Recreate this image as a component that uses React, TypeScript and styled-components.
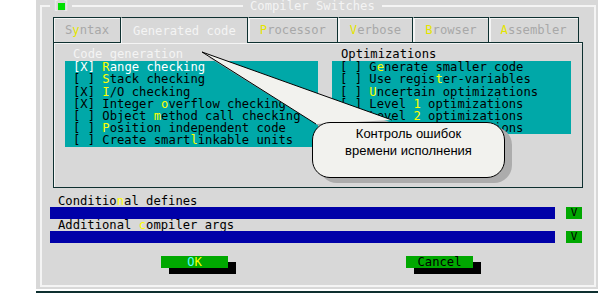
import React from 'react';
import styled, { createGlobalStyle } from 'styled-components';

const GlobalStyle = createGlobalStyle`
  html, body {
    margin: 0;
    padding: 0;
    background: #ffffff;
  }
  body {
    font-family: "DejaVu Sans Mono", "Liberation Mono", monospace;
    font-size: 12.2px;
  }
`;

const DARK = '#0e3030';
const LIGHT = '#f4f4f4';
const GRAY = '#d8d8d8';
const TEAL = '#00a8a8';

const Screen = styled.div`
  position: relative;
  width: 613px;
  height: 300px;
  overflow: hidden;
  padding-left: 36px;
  box-sizing: border-box;
`;

const Dialog = styled.div`
  width: 562px;
  height: 289px;
  background: ${GRAY};
  padding: 5px 2px 2px 4px;
  box-sizing: border-box;
  display: flex;
`;

const StatusLine = styled.div`
  width: 562px;
  height: 2px;
  margin-top: 2px;
  background: ${DARK};
`;

const Frame = styled.div`
  flex: 1;
  border: 2px solid ${LIGHT};
  display: flex;
  flex-direction: column;
`;

const TitleBar = styled.div`
  display: flex;
  align-items: center;
  height: 12px;
  margin-top: -7px;
  line-height: 12px;
`;

const CloseBox = styled.div`
  display: flex;
  align-items: center;
  width: 22px;
  margin-left: 8px;
  justify-content: center;
  background: ${GRAY};
  color: #ececec;
`;

const Bracket = styled.span<{ $side: 'l' | 'r' }>`
  margin: ${p => (p.$side === 'l' ? '0 -2px 0 0' : '0 0 0 -2px')};
`;

const GreenSquare = styled.span`
  width: 7px;
  height: 7px;
  background: #00e000;
`;

const Title = styled.div`
  margin-left: 171px;
  padding: 0 7px;
  background: ${GRAY};
  color: ${LIGHT};
`;

const Tabs = styled.div`
  display: flex;
  margin: 5px 0 0 11px;
  height: 25px;
  position: relative;
  z-index: 1;
`;

const Tab = styled.div<{ $active?: boolean }>`
  padding: 0 11px;
  display: flex;
  align-items: center;
  box-sizing: border-box;
  height: ${p => (p.$active ? '26px' : '25px')};
  border-top: 1px solid ${DARK};
  border-left: 1px solid ${p => (p.$active ? LIGHT : DARK)};
  border-right: 1px solid ${DARK};
  background: ${GRAY};
  color: ${p => (p.$active ? LIGHT : '#a8a8a8')};
  box-shadow: ${p => (p.$active ? 'none' : `inset 1px 1px 0 ${LIGHT}`)};
  & + & {
    border-left: ${p => (p.$active ? `1px solid ${LIGHT}` : 'none')};
  }
`;

const Hot = styled.span<{ $dim?: boolean }>`
  color: ${p => (p.$dim ? '#e4e400' : '#ffff00')};
`;

const Panel = styled.div`
  margin-left: 11px;
  width: 530px;
  height: 146px;
  box-sizing: border-box;
  border: 1px solid ${DARK};
  box-shadow: inset 1px 1px 0 ${LIGHT};
  padding: 5px 10px 0 11px;
  display: grid;
  grid-template-columns: 253px 239px;
  column-gap: 14px;
  align-items: start;
`;

const Group = styled.div``;

const GroupLabel = styled.div<{ $focused?: boolean }>`
  line-height: 12.2px;
  height: 12.2px;
  margin-bottom: 1px;
  padding-left: ${p => (p.$focused ? '8px' : '9px')};
  color: ${p => (p.$focused ? LIGHT : '#000')};
  white-space: pre;
`;

const CheckList = styled.div`
  background: ${TEAL};
  padding-left: 8px;
`;

const CheckItem = styled.div<{ $selected?: boolean }>`
  line-height: 12.2px;
  height: 12.2px;
  white-space: pre;
  color: ${p => (p.$selected ? '#ffffff' : '#000000')};
`;

const Fields = styled.div`
  margin: 7px 0 0 8px;
`;

const FieldLabel = styled.div`
  line-height: 12.2px;
  height: 12.2px;
  padding-left: 8px;
  white-space: pre;
  color: #000;
`;

const FieldRow = styled.div`
  display: grid;
  grid-template-columns: 505px 16px;
  column-gap: 11px;
  height: 12px;
`;

const InputBar = styled.div`
  background: #0000a8;
`;

const DropButton = styled.div`
  background: #00a800;
  color: #000;
  font-size: 11px;
  line-height: 12px;
  text-align: center;
`;

const Buttons = styled.div`
  display: flex;
  margin: 12.5px 0 0 111px;
  gap: 178px;
`;

const Button = styled.div<{ $default?: boolean }>`
  width: 67px;
  height: 12px;
  line-height: 12px;
  background: #00a800;
  box-shadow: 8px 6px 0 #000;
  text-align: center;
  color: ${p => (p.$default ? '#ffff00' : '#000')};
`;

const Cyan = styled.span`
  color: #55ffff;
`;

const Bubble = styled.div`
  position: absolute;
  left: 312px;
  top: 122px;
  width: 193px;
  height: 56px;
  box-sizing: border-box;
  border: 1px solid #000;
  border-radius: 18px;
  background: #f2f2ee;
  box-shadow: 7px 5px 0 #acacac;
  padding-top: 3px;
  text-align: center;
  font-family: "Liberation Sans", Arial, sans-serif;
  font-size: 13px;
  line-height: 16.7px;
  color: #000;
`;

const Tail = styled.svg`
  position: absolute;
  left: 0;
  top: 0;
  overflow: visible;
  pointer-events: none;
`;

const codeGen: [boolean, string, string, string][] = [
  [true, '', 'R', 'ange checking'],
  [false, '', 'S', 'tack checking'],
  [true, '', 'I', '/O checking'],
  [true, 'Integer ', 'o', 'verflow checking'],
  [false, 'Object ', 'm', 'ethod call checking'],
  [false, '', 'P', 'osition independent code'],
  [false, 'Create smart', 'l', 'inkable units'],
];

const optim: [string, string, string][] = [
  ['G', 'e', 'nerate smaller code'],
  ['Use regis', 't', 'er-variables'],
  ['', 'U', 'ncertain optimizations'],
  ['Level ', '1', ' optimizations'],
  ['Level ', '2', ' optimizations'],
  ['Level ', '3', ' optimizations'],
];

const tabs: [string, string, string][] = [
  ['S', 'y', 'ntax'],
  ['Generated code', '', ''],
  ['', 'P', 'rocessor'],
  ['', 'V', 'erbose'],
  ['', 'B', 'rowser'],
  ['', 'A', 'ssembler'],
];

export default function App() {
  return (
    <>
      <GlobalStyle />
      <Screen>
        <Dialog>
          <Frame>
            <TitleBar>
              <CloseBox>
                <Bracket $side="l">[</Bracket>
                <GreenSquare />
                <Bracket $side="r">]</Bracket>
              </CloseBox>
              <Title>Compiler Switches</Title>
            </TitleBar>
            <Tabs>
              {tabs.map(([a, h, b], i) => (
                <Tab key={i} $active={i === 1}>
                  {a}
                  {h && <Hot $dim>{h}</Hot>}
                  {b}
                </Tab>
              ))}
            </Tabs>
            <Panel>
              <Group>
                <GroupLabel $focused>Code generation</GroupLabel>
                <CheckList>
                  {codeGen.map(([on, a, h, b], i) => (
                    <CheckItem key={i} $selected={i === 0}>
                      {on ? '[X] ' : '[ ] '}
                      {a}
                      <Hot>{h}</Hot>
                      {b}
                    </CheckItem>
                  ))}
                </CheckList>
              </Group>
              <Group>
                <GroupLabel>Optimizations</GroupLabel>
                <CheckList>
                  {optim.map(([a, h, b], i) => (
                    <CheckItem key={i}>
                      {'[ ] '}
                      {a}
                      <Hot>{h}</Hot>
                      {b}
                    </CheckItem>
                  ))}
                </CheckList>
              </Group>
            </Panel>
            <Fields>
              <FieldLabel>
                Conditio<Hot>n</Hot>al defines
              </FieldLabel>
              <FieldRow>
                <InputBar />
                <DropButton>V</DropButton>
              </FieldRow>
              <FieldLabel>
                Additional <Hot>c</Hot>ompiler args
              </FieldLabel>
              <FieldRow>
                <InputBar />
                <DropButton>V</DropButton>
              </FieldRow>
              <Buttons>
                <Button $default>
                  <Cyan>O</Cyan>K
                </Button>
                <Button>Cancel</Button>
              </Buttons>
            </Fields>
          </Frame>
        </Dialog>
        <StatusLine />
        <Tail width="613" height="300">
          <polygon points="208,57 398,125 324,129" fill="#acacac" />
          <polygon points="202,52 392,120 316,124" fill="#f2f2ee" />
          <polyline points="392,120 202,52 316,124" fill="none" stroke="#000" strokeWidth="1" />
        </Tail>
        <Bubble>
          Контроль ошибок
          <br />
          времени исполнения
        </Bubble>
      </Screen>
    </>
  );
}
